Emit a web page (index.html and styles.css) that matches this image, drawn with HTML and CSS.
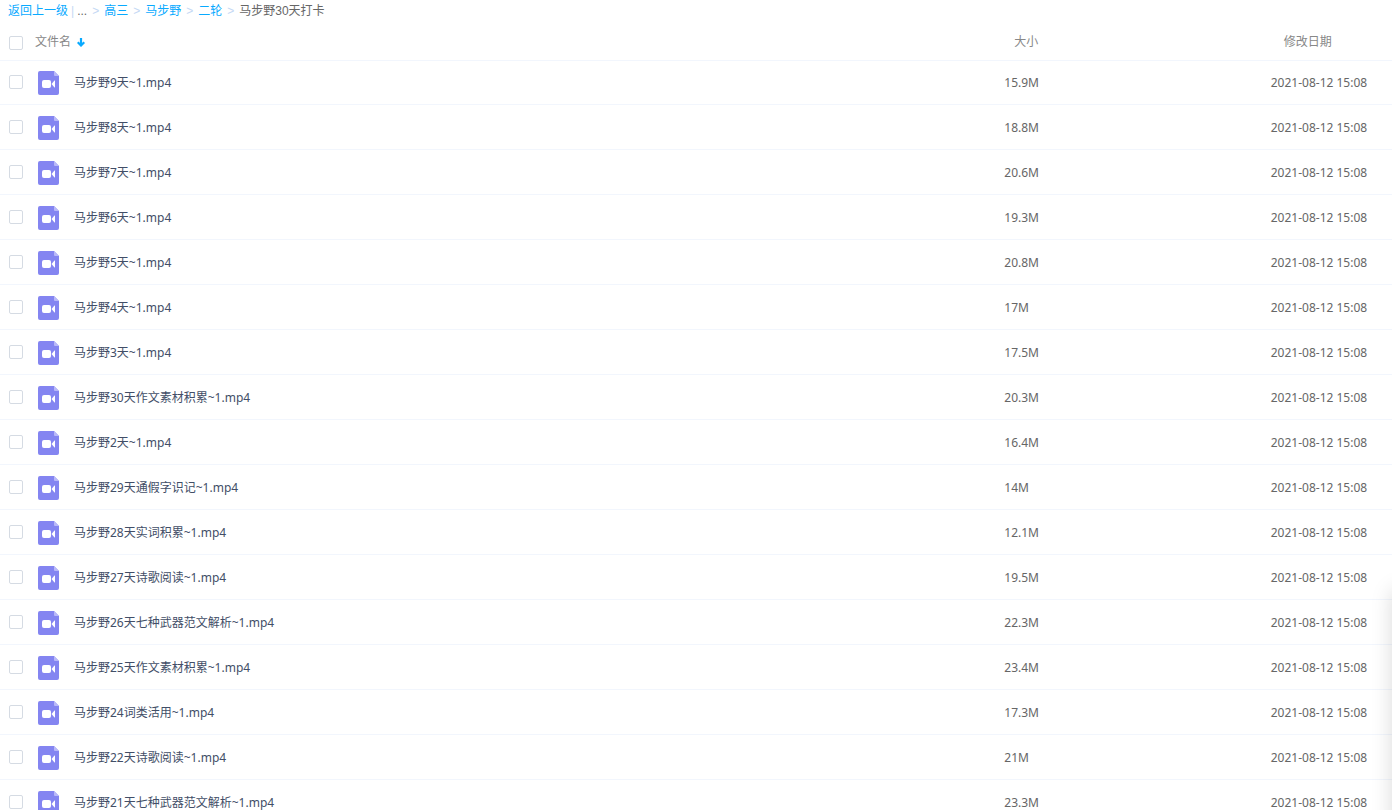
FILE: index.html
```html
<!DOCTYPE html>
<html lang="zh-CN">
<head>
    <meta charset="UTF-8">
    <meta name="viewport" content="width=device-width, initial-scale=1.0">
    <title>马步野30天打卡</title>
    <link rel="stylesheet" href="styles.css">
</head>
<body>
    <!-- Shared icon -->
    <svg class="icon-defs" width="0" height="0" aria-hidden="true">
        <symbol id="video" viewBox="0 0 21 24">
            <path fill="#8485f1" d="M2 0h14l5 5v17a2 2 0 0 1-2 2H2a2 2 0 0 1-2-2V2a2 2 0 0 1 2-2z"/>
            <path fill="#b9b9f8" d="M16 0l5 5h-4a1 1 0 0 1-1-1z"/>
            <rect fill="#fff" x="4" y="9" width="9" height="8" rx="2"/>
            <path fill="#fff" d="M13.500 13l3-3.500h.5v7h-.5z"/>
        </symbol>
    </svg>

    <!-- Breadcrumb -->
    <nav class="breadcrumb">
        <a href="#">返回上一级</a>
        <span class="divider">|</span>
        <span>...</span>
        <span class="arrow">&gt;</span>
        <a href="#">高三</a>
        <span class="arrow">&gt;</span>
        <a href="#">马步野</a>
        <span class="arrow">&gt;</span>
        <a href="#">二轮</a>
        <span class="arrow">&gt;</span>
        <span>马步野30天打卡</span>
    </nav>

    <!-- File list -->
    <table class="file-list">
        <colgroup>
            <col>
            <col class="col-size">
            <col class="col-date">
        </colgroup>
        <thead>
            <tr>
                <th>
                    <div class="head-name">
                        <input type="checkbox" class="check" aria-label="全选">
                        <button type="button" class="sort-btn">文件名
                            <svg width="8" height="9" viewBox="0 0 8 9" aria-hidden="true"><path d="M4 0v8M.7 4.200L4 7.500l3.300-3.300" fill="none" stroke="#09aaff" stroke-width="2.200"/></svg>
                        </button>
                    </div>
                </th>
                <th class="head-cell">大小</th>
                <th class="head-cell">修改日期</th>
            </tr>
        </thead>
        <tbody>
            <tr>
                <td><div class="file"><input type="checkbox" class="check" aria-label="马步野9天~1.mp4"><svg class="file-icon"><use href="#video"/></svg><a href="#">马步野9天~1.mp4</a></div></td>
                <td>15.9M</td>
                <td>2021-08-12 15:08</td>
            </tr>
            <tr>
                <td><div class="file"><input type="checkbox" class="check" aria-label="马步野8天~1.mp4"><svg class="file-icon"><use href="#video"/></svg><a href="#">马步野8天~1.mp4</a></div></td>
                <td>18.8M</td>
                <td>2021-08-12 15:08</td>
            </tr>
            <tr>
                <td><div class="file"><input type="checkbox" class="check" aria-label="马步野7天~1.mp4"><svg class="file-icon"><use href="#video"/></svg><a href="#">马步野7天~1.mp4</a></div></td>
                <td>20.6M</td>
                <td>2021-08-12 15:08</td>
            </tr>
            <tr>
                <td><div class="file"><input type="checkbox" class="check" aria-label="马步野6天~1.mp4"><svg class="file-icon"><use href="#video"/></svg><a href="#">马步野6天~1.mp4</a></div></td>
                <td>19.3M</td>
                <td>2021-08-12 15:08</td>
            </tr>
            <tr>
                <td><div class="file"><input type="checkbox" class="check" aria-label="马步野5天~1.mp4"><svg class="file-icon"><use href="#video"/></svg><a href="#">马步野5天~1.mp4</a></div></td>
                <td>20.8M</td>
                <td>2021-08-12 15:08</td>
            </tr>
            <tr>
                <td><div class="file"><input type="checkbox" class="check" aria-label="马步野4天~1.mp4"><svg class="file-icon"><use href="#video"/></svg><a href="#">马步野4天~1.mp4</a></div></td>
                <td>17M</td>
                <td>2021-08-12 15:08</td>
            </tr>
            <tr>
                <td><div class="file"><input type="checkbox" class="check" aria-label="马步野3天~1.mp4"><svg class="file-icon"><use href="#video"/></svg><a href="#">马步野3天~1.mp4</a></div></td>
                <td>17.5M</td>
                <td>2021-08-12 15:08</td>
            </tr>
            <tr>
                <td><div class="file"><input type="checkbox" class="check" aria-label="马步野30天作文素材积累~1.mp4"><svg class="file-icon"><use href="#video"/></svg><a href="#">马步野30天作文素材积累~1.mp4</a></div></td>
                <td>20.3M</td>
                <td>2021-08-12 15:08</td>
            </tr>
            <tr>
                <td><div class="file"><input type="checkbox" class="check" aria-label="马步野2天~1.mp4"><svg class="file-icon"><use href="#video"/></svg><a href="#">马步野2天~1.mp4</a></div></td>
                <td>16.4M</td>
                <td>2021-08-12 15:08</td>
            </tr>
            <tr>
                <td><div class="file"><input type="checkbox" class="check" aria-label="马步野29天通假字识记~1.mp4"><svg class="file-icon"><use href="#video"/></svg><a href="#">马步野29天通假字识记~1.mp4</a></div></td>
                <td>14M</td>
                <td>2021-08-12 15:08</td>
            </tr>
            <tr>
                <td><div class="file"><input type="checkbox" class="check" aria-label="马步野28天实词积累~1.mp4"><svg class="file-icon"><use href="#video"/></svg><a href="#">马步野28天实词积累~1.mp4</a></div></td>
                <td>12.1M</td>
                <td>2021-08-12 15:08</td>
            </tr>
            <tr>
                <td><div class="file"><input type="checkbox" class="check" aria-label="马步野27天诗歌阅读~1.mp4"><svg class="file-icon"><use href="#video"/></svg><a href="#">马步野27天诗歌阅读~1.mp4</a></div></td>
                <td>19.5M</td>
                <td>2021-08-12 15:08</td>
            </tr>
            <tr>
                <td><div class="file"><input type="checkbox" class="check" aria-label="马步野26天七种武器范文解析~1.mp4"><svg class="file-icon"><use href="#video"/></svg><a href="#">马步野26天七种武器范文解析~1.mp4</a></div></td>
                <td>22.3M</td>
                <td>2021-08-12 15:08</td>
            </tr>
            <tr>
                <td><div class="file"><input type="checkbox" class="check" aria-label="马步野25天作文素材积累~1.mp4"><svg class="file-icon"><use href="#video"/></svg><a href="#">马步野25天作文素材积累~1.mp4</a></div></td>
                <td>23.4M</td>
                <td>2021-08-12 15:08</td>
            </tr>
            <tr>
                <td><div class="file"><input type="checkbox" class="check" aria-label="马步野24词类活用~1.mp4"><svg class="file-icon"><use href="#video"/></svg><a href="#">马步野24词类活用~1.mp4</a></div></td>
                <td>17.3M</td>
                <td>2021-08-12 15:08</td>
            </tr>
            <tr>
                <td><div class="file"><input type="checkbox" class="check" aria-label="马步野22天诗歌阅读~1.mp4"><svg class="file-icon"><use href="#video"/></svg><a href="#">马步野22天诗歌阅读~1.mp4</a></div></td>
                <td>21M</td>
                <td>2021-08-12 15:08</td>
            </tr>
            <tr>
                <td><div class="file"><input type="checkbox" class="check" aria-label="马步野21天七种武器范文解析~1.mp4"><svg class="file-icon"><use href="#video"/></svg><a href="#">马步野21天七种武器范文解析~1.mp4</a></div></td>
                <td>23.3M</td>
                <td>2021-08-12 15:08</td>
            </tr>
        </tbody>
    </table>

    <!-- Panel docked past the right edge, only its shadow shows -->
    <div class="side-panel"></div>
</body>
</html>
```
FILE: styles.css
```css
* {
    margin: 0;
    padding: 0;
    box-sizing: border-box;
}

body {
    height: 100vh;
    overflow: hidden;
    font-family: "Noto Sans", "Noto Sans CJK SC", sans-serif;
    font-size: 12px;
    line-height: 20px;
    color: #666;
    background: #fff;
}

a {
    text-decoration: none;
}

.icon-defs {
    position: absolute;
}

/* Breadcrumb */
.breadcrumb {
    display: flex;
    height: 22px;
    padding: 1px 0 0 8px;
    font-family: "Liberation Sans", "Noto Sans CJK SC", sans-serif;
}

.breadcrumb a {
    color: #09aaff;
}

.breadcrumb .divider {
    margin: 0 3px;
    color: #c4d8f4;
}

.breadcrumb .arrow {
    margin: 0 5px;
    color: #c4d8f4;
}

/* File list */
.file-list {
    width: 100%;
    table-layout: fixed;
    border-collapse: separate;
    border-spacing: 0;
}

.col-size {
    width: 19%;
}

.col-date {
    width: 9%;
}

th {
    height: 38px;
    padding-top: 2px;
    font-weight: normal;
    text-align: left;
    color: #888;
}

.head-name {
    display: flex;
    align-items: center;
    gap: 12px;
    padding-left: 9px;
}

.head-name .check {
    margin-top: 2px;
}

.head-cell {
    padding-left: 12px;
}

.head-cell:last-child {
    padding-left: 17px;
}

.sort-btn {
    display: flex;
    align-items: center;
    gap: 6px;
    border: none;
    background: none;
    font: inherit;
    color: inherit;
    cursor: pointer;
}

td {
    height: 45px;
    padding: 2px 0 0 2px;
    border-bottom: 1px solid #f2f6fd;
    white-space: nowrap;
}

td:first-child {
    padding-left: 0;
}

td:last-child {
    padding-left: 4px;
}

tbody tr:first-child td {
    box-shadow: inset 0 1px #f2f6fd;
}

.file {
    display: flex;
    align-items: center;
    padding-left: 9px;
}

.file .check {
    margin-bottom: 2px;
}

.file a {
    color: #424e67;
}

.file-icon {
    width: 21px;
    height: 24px;
    margin: 0 15px;
}

.check {
    appearance: none;
    width: 14px;
    height: 14px;
    border: 1px solid #d5dbe3;
    border-radius: 2px;
    background: #fff;
}

.check:checked {
    background: #09aaff;
}

/* Side panel */
.side-panel {
    position: fixed;
    top: 590px;
    bottom: -20px;
    left: 100%;
    width: 300px;
    box-shadow: 0 0 20px rgba(0, 0, 0, 0.15);
}
```
